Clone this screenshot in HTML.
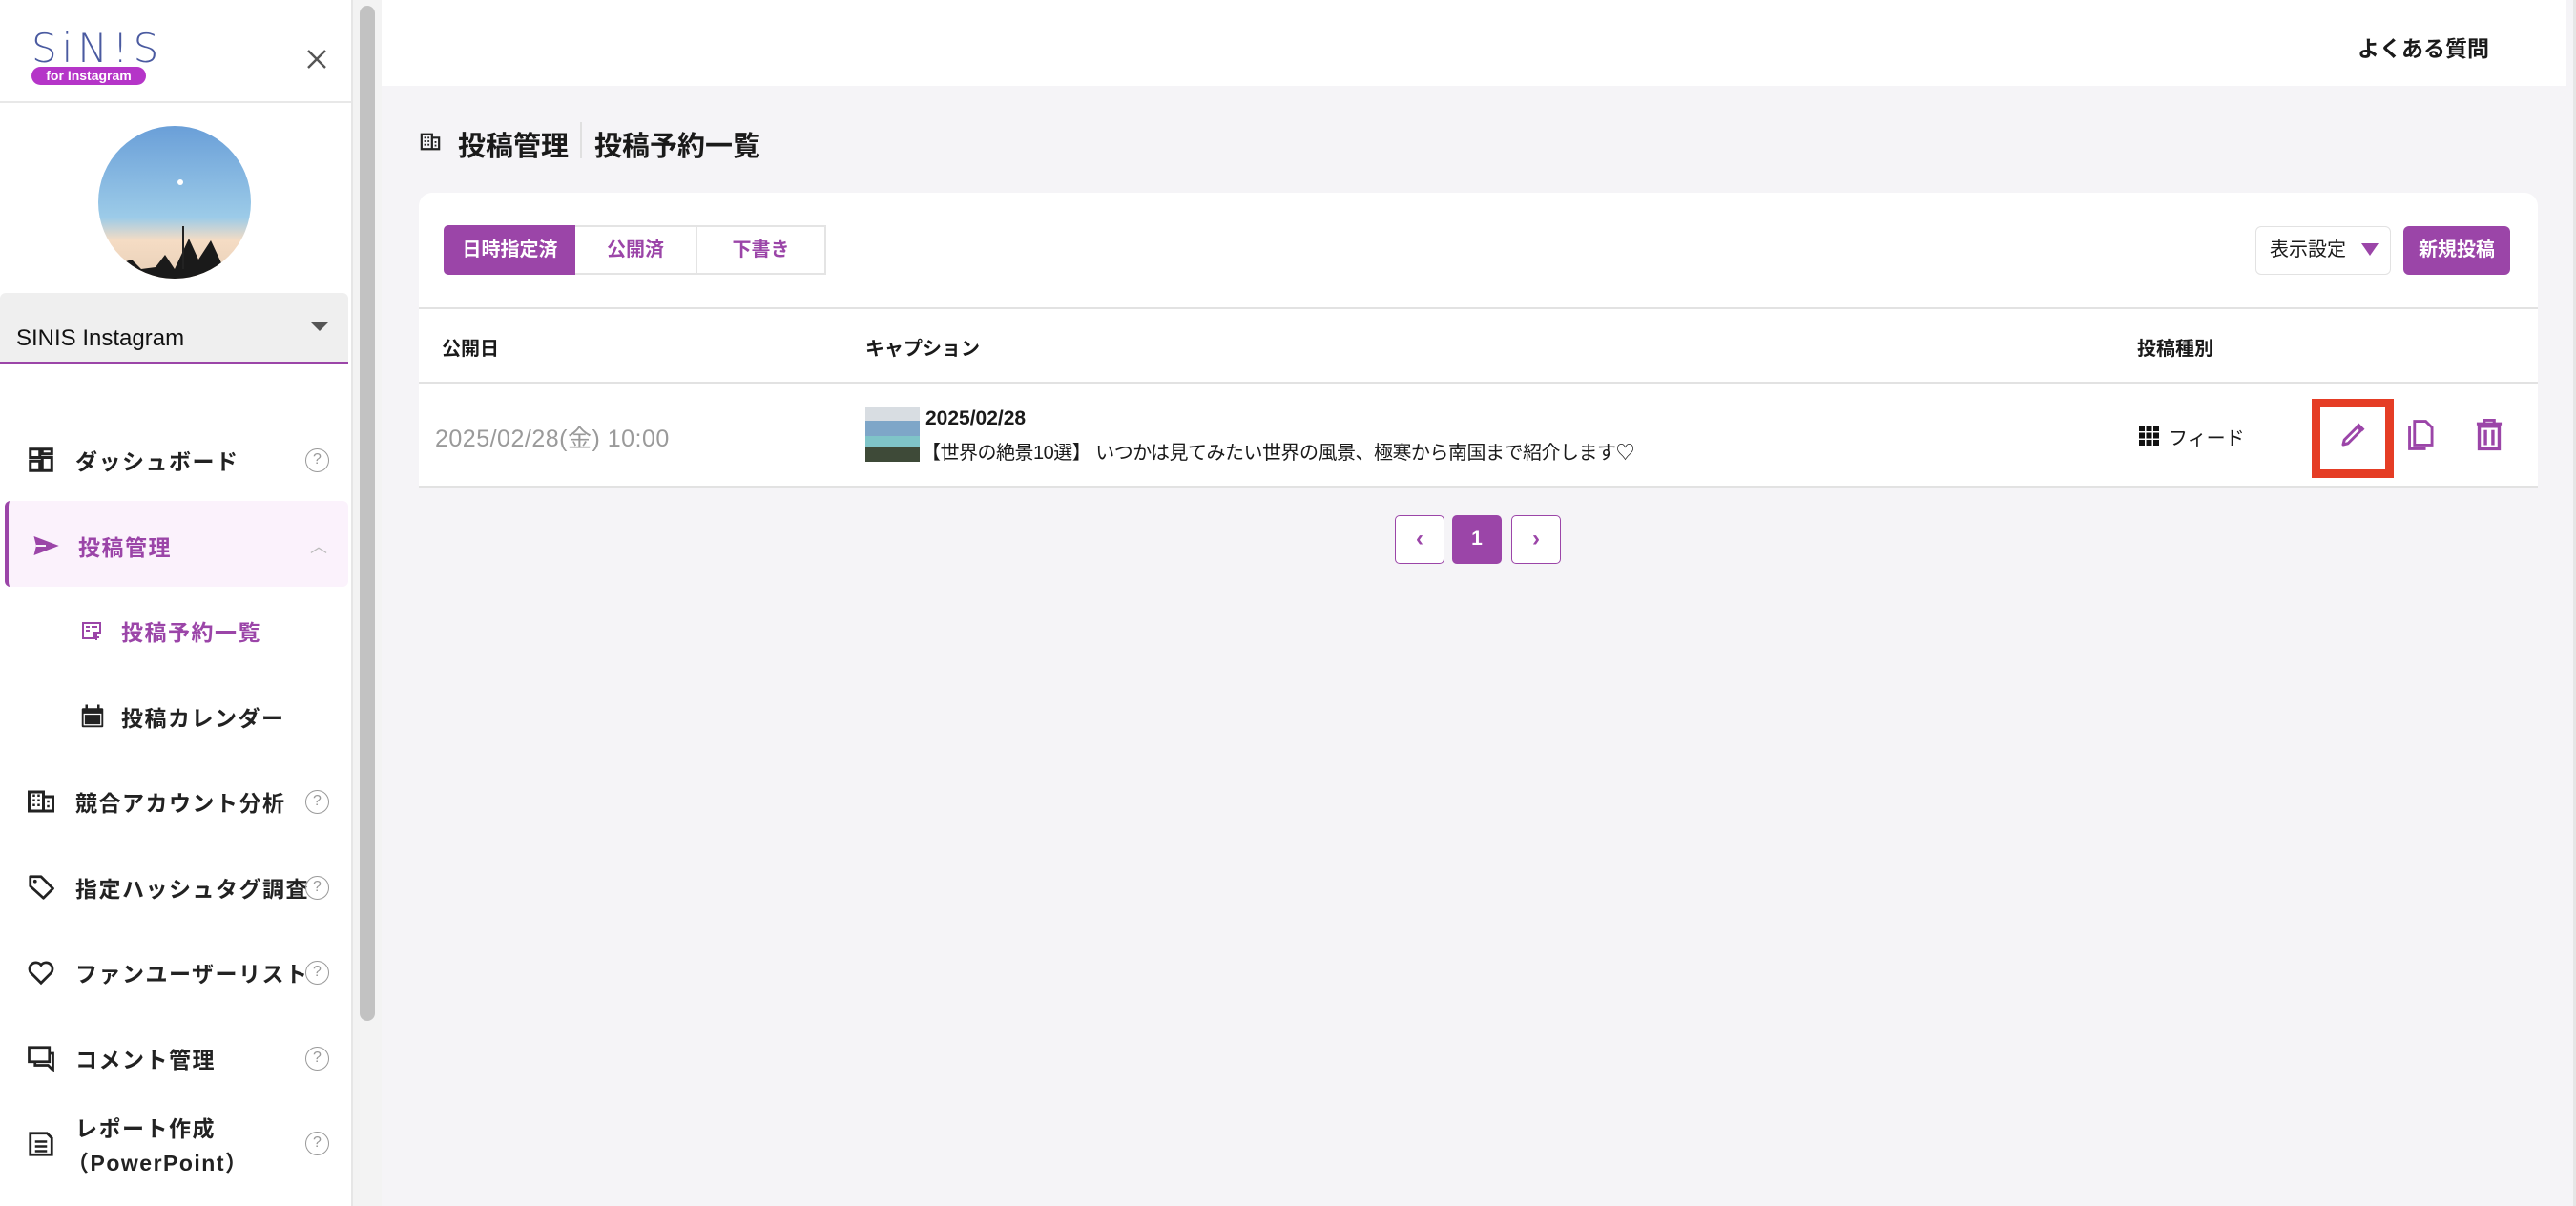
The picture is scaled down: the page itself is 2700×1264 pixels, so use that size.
<!DOCTYPE html>
<html><head><meta charset="utf-8"><style>
*{box-sizing:border-box;margin:0;padding:0}
body{width:2700px;height:1264px;overflow:hidden;background:#f5f4f7;font-family:"Liberation Sans","Noto Sans CJK JP",sans-serif;color:#1a1a1a;position:relative}
.abs{position:absolute}
#side{left:0;top:0;width:370px;height:1264px;background:#fff;border-right:2px solid #e6e6e6}
.mi{position:absolute;left:0;width:365px;height:60px;display:flex;align-items:center;font-size:23px;font-weight:bold;letter-spacing:1.5px;color:#222}
.mi .ic{position:absolute;left:28px;top:15px;width:30px;height:30px}
.mi .tx{position:absolute;left:79px}
.q{position:absolute;left:320px;width:25px;height:25px;border:1.5px solid #999;border-radius:50%;color:#999;font-size:16px;text-align:center;line-height:22px;font-weight:normal;letter-spacing:0}
.purple{color:#9b45a8}
#top{left:400px;top:0;width:2290px;height:90px;background:#fff}
.card{left:439px;top:202px;width:2221px;height:308px;background:#fff;border-radius:14px 14px 0 0}
.tab{position:absolute;top:236px;height:52px;border:2px solid #e4e4e4;font-size:20px;font-weight:bold;color:#9b45a8;text-align:center;line-height:48px;background:#fff}
.hl{position:absolute;height:2px;background:#e2e2e2;left:439px;width:2221px}
.th{position:absolute;top:349px;font-size:20px;font-weight:bold}
.pg{position:absolute;top:540px;width:52px;height:51px;border:1.5px solid #9b45a8;border-radius:5px;background:#fff;color:#9b45a8;font-size:24px;text-align:center;line-height:48px;font-weight:bold}
</style></head><body>
<div id="side" class="abs">
  <div class="abs" style="left:33px;top:26px;font-size:42px;letter-spacing:5px;color:#4a5aa0;font-family:'DejaVu Sans',sans-serif;font-weight:300">SiN!S</div>
  <div class="abs" style="left:33px;top:70px;width:120px;height:19px;border-radius:10px;background:#b535c8;color:#fff;font-size:14px;font-weight:bold;text-align:center;line-height:19px">for Instagram</div>
  <svg class="abs" style="left:320px;top:50px" width="24" height="24" viewBox="0 0 24 24"><path d="M3 3L21 21M21 3L3 21" stroke="#555" stroke-width="2.4"/></svg>
  <div class="abs" style="left:0;top:106px;width:368px;height:2px;background:#e8e8e8"></div>
  <svg class="abs" style="left:103px;top:132px" width="160" height="160" viewBox="0 0 160 160">
    <defs><linearGradient id="sky" x1="0" y1="0" x2="0" y2="1"><stop offset="0" stop-color="#6a9fd8"/><stop offset=".6" stop-color="#9ccbe8"/><stop offset=".75" stop-color="#f5dcc4"/><stop offset="1" stop-color="#e8d0b8"/></linearGradient><clipPath id="cc"><circle cx="80" cy="80" r="80"/></clipPath></defs>
    <g clip-path="url(#cc)"><rect width="160" height="160" fill="url(#sky)"/>
    <path d="M20 145 L35 140 L45 150 L60 148 L70 135 L80 150 L95 118 L105 140 L118 120 L132 150 L160 160 L0 160Z" fill="#1a1a1a"/><path d="M89 105V150" stroke="#222" stroke-width="2"/></g>
    <circle cx="86" cy="59" r="3" fill="#fff"/>
  </svg>
  <div class="abs" style="left:0;top:307px;width:365px;height:75px;background:#efefef;border-radius:6px 6px 0 0;border-bottom:3px solid #9b45a8"></div>
  <div class="abs" style="left:17px;top:341px;font-size:24px;color:#111">SINIS Instagram</div>
  <svg class="abs" style="left:326px;top:338px" width="18" height="10"><path d="M0 0H18L9 9Z" fill="#555"/></svg>

  <div class="mi" style="top:452px"><svg class="ic" viewBox="0 0 24 24"><path d="M3 3h8v7H3zM13 3h8v4h-8zM13 10h8v11h-8zM3 13h8v8H3z" fill="none" stroke="#222" stroke-width="2.4"/></svg><span class="tx">ダッシュボード</span><span class="q">?</span></div>
  <div class="abs" style="left:5px;top:525px;width:360px;height:90px;background:#fbf2fc;border-left:4px solid #9b45a8;border-radius:6px"></div>
  <div class="mi purple" style="top:542px"><svg class="ic" viewBox="0 0 24 24" style="left:33px"><path d="M2 4L23 12L2 20L4 12Z" fill="#9b45a8"/><path d="M4 12H12" stroke="#fff" stroke-width="1.5"/></svg><span class="tx" style="left:82px">投稿管理</span><span style="position:absolute;left:325px;color:#bbb;font-size:18px;font-weight:normal">︿</span></div>
  <div class="mi purple" style="top:631px"><svg class="ic" viewBox="0 0 24 24" style="left:84px;width:24px"><path d="M3 4h18v10h-6v6H3z" fill="none" stroke="#9b45a8" stroke-width="2"/><path d="M6 8h4M12 8h6M6 12h4M17 16v6M14 19h6" stroke="#9b45a8" stroke-width="2"/></svg><span class="tx" style="left:127px">投稿予約一覧</span></div>
  <div class="mi" style="top:721px"><svg class="ic" viewBox="0 0 24 24" style="left:82px"><rect x="3" y="5" width="18" height="16" rx="1" fill="#222"/><rect x="5" y="10" width="14" height="9" fill="#222" stroke="#fff" stroke-width="1"/><path d="M7 2v4M17 2v4" stroke="#222" stroke-width="2"/></svg><span class="tx" style="left:127px">投稿カレンダー</span></div>
  <div class="mi" style="top:810px"><svg class="ic" viewBox="0 0 24 24"><path d="M2 20V4h12v16zM14 8h8v12h-8M2 20h20" fill="none" stroke="#222" stroke-width="2.4"/><path d="M5 7h2M9 7h2M5 11h2M9 11h2M5 15h2M9 15h2M17 12h2M17 16h2" stroke="#222" stroke-width="2"/></svg><span class="tx">競合アカウント分析</span><span class="q">?</span></div>
  <div class="mi" style="top:900px"><svg class="ic" viewBox="0 0 24 24"><path d="M3 3h9l10 10-8 8L3 11z" fill="none" stroke="#222" stroke-width="2.2" stroke-linejoin="round"/><circle cx="7" cy="7" r="1.5" fill="#222"/></svg><span class="tx">指定ハッシュタグ調査</span><span class="q">?</span></div>
  <div class="mi" style="top:989px"><svg class="ic" viewBox="0 0 24 24"><path d="M12 21L3.5 12.5A5 5 0 0 1 12 6a5 5 0 0 1 8.5 6.5Z" fill="none" stroke="#222" stroke-width="2.2"/></svg><span class="tx">ファンユーザーリスト</span><span class="q">?</span></div>
  <div class="mi" style="top:1079px"><svg class="ic" viewBox="0 0 24 24"><path d="M2 3h17v12H2zM19 8h3v14l-4-4H7v-3" fill="none" stroke="#222" stroke-width="2.2"/></svg><span class="tx">コメント管理</span><span class="q">?</span></div>
  <div class="mi" style="top:1168px;height:60px"><svg class="ic" viewBox="0 0 24 24" style="top:16px"><path d="M3 3h14l4 4v14H3z" fill="none" stroke="#222" stroke-width="2.2"/><path d="M7 10h10M7 14h10M7 18h10" stroke="#222" stroke-width="2"/></svg><span class="tx" style="top:-4px">レポート作成</span><span class="tx" style="top:32px;left:70px">（PowerPoint）</span><span class="q" style="top:18px">?</span></div>
</div>
<div class="abs" style="left:370px;top:0;width:30px;height:1264px;background:#f3f3f3"></div>
<div class="abs" style="left:377px;top:6px;width:16px;height:1064px;background:#c2c2c2;border-radius:8px"></div>
<div class="abs" style="left:2697px;top:0;width:3px;height:1264px;background:#e6e6e6"></div>

<div id="top" class="abs"><span class="abs" style="left:2071px;top:32px;font-size:23px;font-weight:bold">よくある質問</span></div>

<svg class="abs" style="left:439px;top:137px" width="24" height="22" viewBox="0 0 24 24"><path d="M2 21V4h12v17zM14 8h8v13h-8M2 21h20" fill="none" stroke="#222" stroke-width="2.4"/><path d="M5 8h2M9 8h2M5 12h2M9 12h2M5 16h2M9 16h2M17 13h2M17 17h2" stroke="#222" stroke-width="2"/></svg>
<div class="abs" style="left:480px;top:130px;font-size:29px;font-weight:bold">投稿管理</div>
<div class="abs" style="left:608px;top:128px;width:2px;height:38px;background:#e0e0e0"></div>
<div class="abs" style="left:623px;top:130px;font-size:29px;font-weight:bold">投稿予約一覧</div>

<div class="card abs"></div>
<div class="tab" style="left:465px;width:139px;background:#9b45a8;color:#fff;border-color:#9b45a8;border-radius:5px 0 0 5px">日時指定済</div>
<div class="tab" style="left:603px;width:128px;border-left:none">公開済</div>
<div class="tab" style="left:729px;width:137px">下書き</div>
<div class="abs" style="left:2364px;top:237px;width:142px;height:51px;border:1.5px solid #e2e2e2;border-radius:6px;background:#fff;font-size:20px;line-height:48px;padding-left:14px">表示設定 <svg width="18" height="14" style="margin-left:10px;vertical-align:-1px"><path d="M0 0H18L9 13Z" fill="#9b45a8"/></svg></div>
<div class="abs" style="left:2519px;top:237px;width:112px;height:51px;border-radius:6px;background:#9b45a8;color:#fff;font-size:20px;font-weight:bold;text-align:center;line-height:51px">新規投稿</div>
<div class="hl" style="top:322px"></div>
<div class="th" style="left:463px">公開日</div>
<div class="th" style="left:907px">キャプション</div>
<div class="th" style="left:2240px">投稿種別</div>
<div class="hl" style="top:400px"></div>
<div class="abs" style="left:456px;top:440px;font-size:25px;color:#9a9a9a;letter-spacing:0.5px">2025/02/28(金) 10:00</div>
<svg class="abs" style="left:907px;top:427px" width="57" height="57" viewBox="0 0 57 57"><rect width="57" height="57" fill="#5a6a5a"/><rect width="57" height="14" fill="#d8dde2"/><rect y="14" width="57" height="16" fill="#7ea6c8"/><rect y="30" width="57" height="12" fill="#7fc4c8"/><rect y="42" width="57" height="15" fill="#3e4a38"/></svg>
<div class="abs" style="left:970px;top:427px;font-size:21px;font-weight:bold">2025/02/28</div>
<div class="abs" style="left:966px;top:458px;font-size:20px;letter-spacing:-0.5px">【世界の絶景10選】 いつかは見てみたい世界の風景、極寒から南国まで紹介します♡</div>
<svg class="abs" style="left:2242px;top:446px" width="21" height="21"><g fill="#111"><rect x="0" y="0" width="6" height="6"/><rect x="7.5" y="0" width="6" height="6"/><rect x="15" y="0" width="6" height="6"/><rect x="0" y="7.5" width="6" height="6"/><rect x="7.5" y="7.5" width="6" height="6"/><rect x="15" y="7.5" width="6" height="6"/><rect x="0" y="15" width="6" height="6"/><rect x="7.5" y="15" width="6" height="6"/><rect x="15" y="15" width="6" height="6"/></g></svg>
<div class="abs" style="left:2273px;top:443px;font-size:20px">フィード</div>
<div class="abs" style="left:2423px;top:418px;width:86px;height:83px;border:9px solid #e53d25"></div>
<svg class="abs" style="left:2451px;top:441px" width="30" height="30" viewBox="0 0 24 24"><path d="M4 20l1-4L16 5l3 3L8 19z" fill="none" stroke="#9b45a8" stroke-width="2.4" stroke-linejoin="round"/><path d="M15 4l2-2 5 5-2 2z" fill="#9b45a8"/></svg>
<svg class="abs" style="left:2520px;top:439px" width="32" height="34" viewBox="0 0 24 26"><path d="M8 2h9l5 5v14H8z" fill="none" stroke="#9b45a8" stroke-width="2.2"/><path d="M4 6v18h13" fill="none" stroke="#9b45a8" stroke-width="2.2"/></svg>
<svg class="abs" style="left:2594px;top:439px" width="30" height="34" viewBox="0 0 22 26"><path d="M1 4h20M7 4V1h8v3" fill="none" stroke="#9b45a8" stroke-width="2.4"/><path d="M3 6h16v18H3z" fill="none" stroke="#9b45a8" stroke-width="2.6"/><path d="M8 9v12M14 9v12" stroke="#9b45a8" stroke-width="2.6"/></svg>
<div class="hl" style="top:509px"></div>

<div class="pg" style="left:1462px">‹</div>
<div class="pg" style="left:1522px;background:#9b45a8;color:#fff;font-size:21px">1</div>
<div class="pg" style="left:1584px">›</div>
</body></html>
